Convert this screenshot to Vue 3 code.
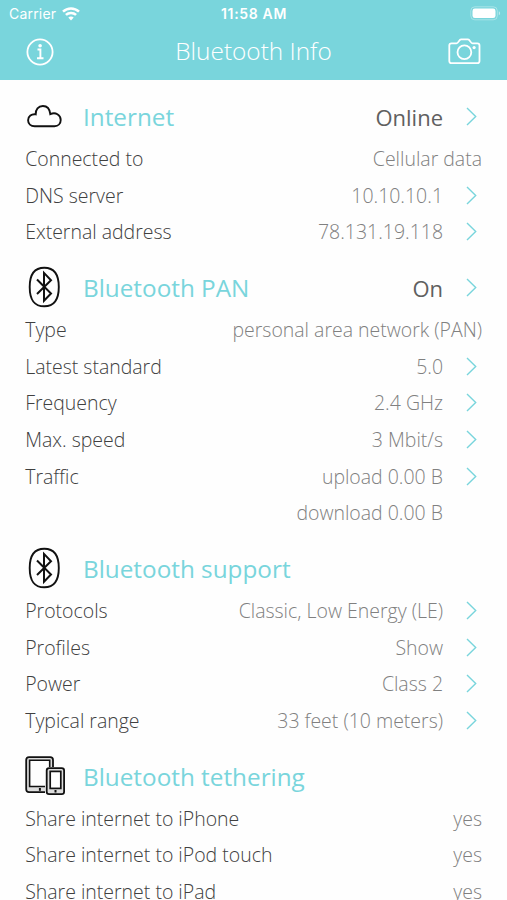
<script setup>
const sections = [
  {
    icon: 'cloud', title: 'Internet', value: 'Online', link: true,
    rows: [
      { label: 'Connected to', value: 'Cellular data' },
      { label: 'DNS server', value: '10.10.10.1', link: true },
      { label: 'External address', value: '78.131.19.118', link: true },
    ],
  },
  {
    icon: 'bluetooth', title: 'Bluetooth PAN', value: 'On', link: true,
    rows: [
      { label: 'Type', value: 'personal area network (PAN)' },
      { label: 'Latest standard', value: '5.0', link: true },
      { label: 'Frequency', value: '2.4 GHz', link: true },
      { label: 'Max. speed', value: '3 Mbit/s', link: true },
      { label: 'Traffic', value: 'upload 0.00 B', link: true },
      { label: '', value: 'download 0.00 B', inset: true },
    ],
  },
  {
    icon: 'bluetooth', title: 'Bluetooth support',
    rows: [
      { label: 'Protocols', value: 'Classic, Low Energy (LE)', link: true },
      { label: 'Profiles', value: 'Show', link: true },
      { label: 'Power', value: 'Class 2', link: true },
      { label: 'Typical range', value: '33 feet (10 meters)', link: true },
    ],
  },
  {
    icon: 'devices', title: 'Bluetooth tethering',
    rows: [
      { label: 'Share internet to iPhone', value: 'yes' },
      { label: 'Share internet to iPod touch', value: 'yes' },
      { label: 'Share internet to iPad', value: 'yes' },
    ],
  },
]
</script>

<template>
  <div class="screen">
    <header class="top">
      <div class="status">
        <div class="carrier">
          <span>Carrier</span>
          <svg width="18" height="14" viewBox="0 0 18 14" fill="none" stroke="#fff" stroke-width="2.5">
            <path d="M1 4.600C5.500.3 12.500.3 17 4.600M3.900 7.900C6.700 5.200 11.300 5.200 14.100 7.900" />
            <path d="M9 13.400 6.300 10.600C7.800 9.200 10.200 9.200 11.700 10.600Z" fill="#fff" stroke="none" />
          </svg>
        </div>
        <span class="time">11:58 AM</span>
        <svg class="battery" width="31" height="15" viewBox="0 0 31 15">
          <rect x=".8" y=".8" width="26.500" height="13" rx="4" fill="none" stroke="#fff" stroke-opacity=".35" />
          <rect x="2.500" y="2.500" width="23" height="9.600" rx="2.400" fill="#fff" />
          <path d="M28.800 5.300c1.800.8 1.800 3.200 0 4z" fill="#fff" fill-opacity=".5" />
        </svg>
      </div>
      <div class="nav">
        <svg width="28" height="28" viewBox="0 0 28 28" fill="none" stroke="#fff">
          <circle cx="14" cy="14" r="12.600" stroke-width="1.800" />
          <path d="M11.500 11.500h2.900v8.300M11 20.300h6.500" stroke-width="1.900" />
          <circle cx="14.100" cy="7.700" r="1.800" fill="#fff" stroke="none" />
        </svg>
        <h1>Bluetooth Info</h1>
        <svg width="33" height="27" viewBox="0 0 33 27" fill="none" stroke="#fff" stroke-width="1.800" stroke-linejoin="round">
          <path d="M3.500 5.400H8.500C10.500 5.400 11 1.300 13 1.300H20C22 1.300 22.500 5.400 24.500 5.400H29.300Q31.500 5.400 31.500 7.600V23Q31.500 25.200 29.300 25.200H3.500Q1.300 25.200 1.300 23V7.600Q1.300 5.400 3.500 5.400Z" />
          <circle cx="16.400" cy="14.300" r="6.900" />
          <circle cx="26.100" cy="9.600" r="1.600" fill="#fff" stroke="none" />
        </svg>
      </div>
    </header>

    <main>
      <section v-for="s in sections" :key="s.title">
        <div class="heading">
          <div class="icon">
            <svg v-if="s.icon === 'cloud'" width="36" height="24" viewBox="0 0 36 24" fill="none" stroke="#111" stroke-width="1.900">
              <path d="M8.700 22.200H28.500C32.200 22.200 34.700 19.600 34.700 16C34.700 10.800 29.500 7.800 24.300 10.200C23.800 5.200 21.200 2 16.900 2C12.300 2 9.500 5.400 9.700 10.300C5.600 9.700 2.100 12.200 2.100 16.200C2.100 19.900 4.800 22.200 8.700 22.200Z" />
            </svg>
            <svg v-else-if="s.icon === 'bluetooth'" width="36" height="42" viewBox="0 0 36 42" fill="none" stroke="#111">
              <path d="M18.300 1.800C28 1.800 32.800 7.500 32.800 21S28 40.300 18.300 40.300S3.700 34.500 3.700 21S8.500 1.800 18.300 1.800Z" stroke-width="1.900" />
              <path d="M11 13.500 25 27.500 18 34.800V6.900L25 14.200 11 28" stroke-width="2" />
            </svg>
            <svg v-else class="devices" width="41" height="40" viewBox="0 0 41 40" fill="none" stroke="#111">
              <path d="M20 36.100H4Q1.200 36.100 1.200 33.300V4Q1.200 1.200 4 1.200H25.200Q28 1.200 28 4V11H24.700V4.300H4.600V30.500H20Z" fill="#ddd" stroke="none" />
              <path d="M20 36.100H4Q1.200 36.100 1.200 33.300V4Q1.200 1.200 4 1.200H25.200Q28 1.200 28 4V11" stroke-width="1.800" />
              <path d="M20 30.500H4.600V4.300H24.700V11" stroke-width="1.600" />
              <path d="M14.900 32v2.800" stroke-width="2" />
              <rect x="21.700" y="12.100" width="17.400" height="26" rx="2.400" fill="#ddd" stroke-width="1.800" />
              <rect x="25.200" y="15.400" width="10.600" height="17" fill="#fefefe" stroke-width="1.700" />
              <path d="M30.500 34v2.500" stroke-width="2" />
            </svg>
          </div>
          <h2>{{ s.title }}</h2>
          <span v-if="s.value" class="state">{{ s.value }}</span>
          <svg v-if="s.link" class="chevron" width="11" height="19" viewBox="0 0 11 19"><path d="M1 1 9.700 9.500 1 18" /></svg>
        </div>
        <div v-for="r in s.rows" :key="r.label" class="row">
          <span class="label">{{ r.label }}</span>
          <span class="value" :class="{ inset: r.inset }">{{ r.value }}</span>
          <svg v-if="r.link" class="chevron" width="11" height="19" viewBox="0 0 11 19"><path d="M1 1 9.700 9.500 1 18" /></svg>
        </div>
      </section>
    </main>
  </div>
</template>

<style>
body { margin: 0; background: #fff; overflow: hidden; }
</style>

<style scoped>
.screen {
  height: 900px;
  overflow: hidden;
  background: #fefefe;
  font-family: "Open Sans", sans-serif;
  font-weight: 300;
}
svg { display: block; flex: none; }
h1, h2 { margin: 0; font-weight: 300; white-space: nowrap; }
.top { height: 79.5px; background: #79d5dc; color: #fff; }
.status {
  display: grid;
  grid-template-columns: 1fr auto 1fr;
  align-items: center;
  height: 27px;
  padding: 0 6px 0 9px;
  font-family: Inter, sans-serif;
  font-size: 14px;
  font-weight: 400;
}
.carrier { display: flex; align-items: center; gap: 6px; letter-spacing: .2px; }
.time { font-weight: 600; font-size: 14px; letter-spacing: .65px; margin-right: 2px; }
.battery { justify-self: end; }
.nav {
  display: flex;
  align-items: center;
  justify-content: space-between;
  height: 49px;
  padding: 0 26px;
}
h1 { font-size: 24.400px; line-height: 34px; padding: 0 0 2px 5px; }
main { padding-top: 13.400px; }
section { margin-bottom: 13.600px; }
.heading, .row { display: flex; align-items: center; padding: 0 25px 0 25.200px; }
.heading { height: 47.400px; }
.icon { display: flex; align-items: center; width: 57.800px; }
.icon svg { margin: 0 0 1px .8px; }
.icon .devices { margin: 0 0 0 -.2px; }
h2 { font-size: 24.300px; font-weight: 370; color: #79d5dc; }
.state { margin-left: auto; font-size: 22px; font-weight: 400; color: #606060; }
.heading .chevron { margin-bottom: 1px; }
.row { height: 36.670px; font-size: 19.480px; white-space: nowrap; }
.label { color: #404040; }
.value { margin-left: auto; color: #808080; }
.inset { margin-right: 39px; }
.chevron { margin: 0 5px 0 23px; fill: none; stroke: #79d5dc; stroke-width: 1.400; }
</style>
